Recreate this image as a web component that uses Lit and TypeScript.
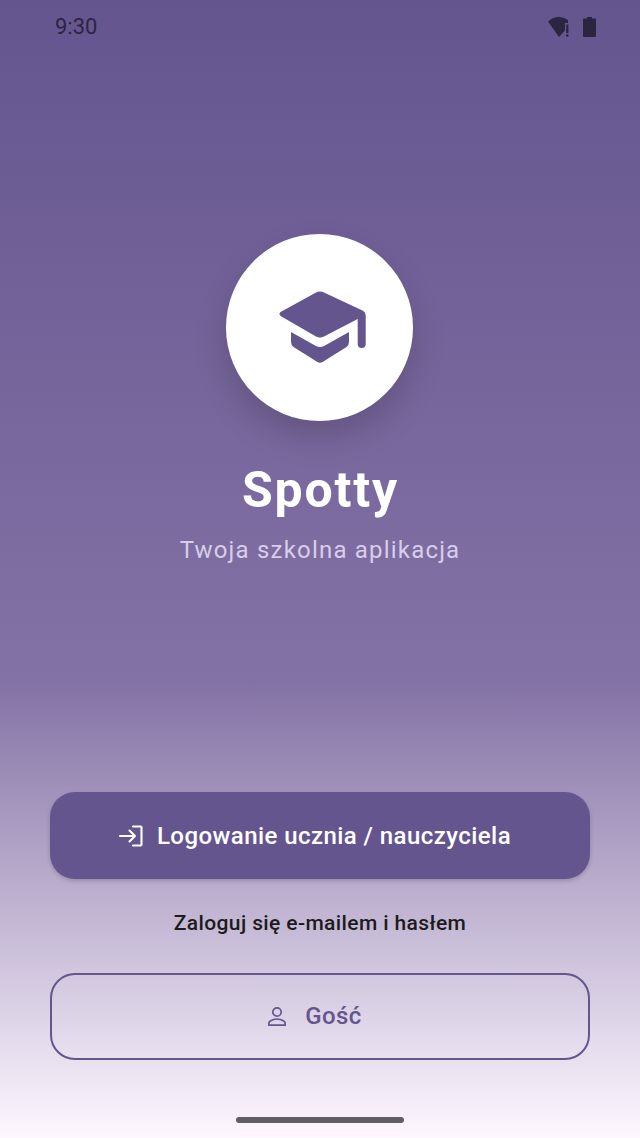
import { LitElement, html, css } from "lit";
import { customElement } from "lit/decorators.js";

@customElement("app-root")
export class AppRoot extends LitElement {
  static styles = css`
    :host {
      display: block;
      width: 640px;
      height: 1138px;
      font-family: Roboto, "Noto Sans", sans-serif;
    }
    .page {
      position: relative;
      display: flex;
      flex-direction: column;
      box-sizing: border-box;
      height: 1138px;
      overflow: hidden;
      background: linear-gradient(180deg, #65558f 0%, #8372a5 60%, #fef7ff 100%);
    }
    .status {
      display: flex;
      justify-content: space-between;
      align-items: center;
      height: 52px;
      padding: 2px 44px 0 55px;
      box-sizing: border-box;
      color: #2c2540;
      font-size: 22px;
      line-height: 50px;
    }
    .status-icons {
      display: flex;
      align-items: center;
      gap: 14px;
    }
    .status-icons svg {
      display: block;
    }
    .hero {
      display: flex;
      flex-direction: column;
      align-items: center;
      padding-top: 182px;
    }
    .logo {
      display: flex;
      align-items: center;
      justify-content: center;
      width: 187px;
      height: 187px;
      margin-right: 1px;
      border-radius: 50%;
      background: #fff;
      box-shadow: 0 16px 32px rgba(0, 0, 0, 0.17);
    }
    .cap {
      margin-bottom: 1px;
    }
    h1 {
      margin: 38px 0 0 1px;
      font-size: 50px;
      line-height: 62px;
      font-weight: 700;
      letter-spacing: 1.8px;
      color: #fff;
    }
    .sub {
      margin: 13px 0 0;
      font-size: 24px;
      line-height: 32px;
      letter-spacing: 1.2px;
      color: #d8cdea;
    }
    .actions {
      display: flex;
      flex-direction: column;
      margin-top: auto;
      padding: 0 50px 78.5px;
    }
    .btn {
      display: flex;
      align-items: center;
      justify-content: center;
      box-sizing: border-box;
      height: 87px;
      padding-right: 11px;
      border-radius: 25px;
      font-size: 24px;
      font-weight: 500;
      letter-spacing: 0.44px;
    }
    .primary {
      gap: 13px;
      background: #65558f;
      color: #fff;
      box-shadow: 0 2px 4px rgba(0, 0, 0, 0.18);
    }
    .hint {
      margin: 29.7px 0 36px;
      text-align: center;
      font-size: 21px;
      line-height: 28px;
      font-weight: 500;
      letter-spacing: 0.38px;
      color: #1d1b20;
    }
    .ghost {
      gap: 18px;
      height: 86.5px;
      border: 2px solid #65558f;
      color: #65558f;
    }
    .home {
      position: absolute;
      left: 236px;
      bottom: 15px;
      width: 168px;
      height: 6px;
      border-radius: 3px;
      background: #605d66;
    }
  `;

  render() {
    return html`
      <div class="page">
        <div class="status">
          <span>9:30</span>
          <span class="status-icons">
            <svg width="21" height="20" viewBox="0 0 21 20">
              <path fill="#2c2540" d="M0 4.500C3 1.800 6.800 0 10.500 0c3.300 0 6.500 1.100 9.500 3.300V6H17V13.500L11 20z"/>
              <path fill="#2c2540" d="M18.200 7.500h2.200v8.500h-2.200zM18.200 17.300h2.200v2.500h-2.200z"/>
            </svg>
            <svg width="13" height="20" viewBox="0 0 13 20">
              <path fill="#2c2540" d="M4 0h5v1.500h3a1 1 0 0 1 1 1V19a1 1 0 0 1-1 1H1a1 1 0 0 1-1-1V2.500a1 1 0 0 1 1-1h3z"/>
            </svg>
          </span>
        </div>
        <div class="hero">
          <div class="logo">
            <svg class="cap" width="96" height="96" viewBox="0 0 96 96">
              <path fill="#65558f" d="M44 13.500L9 32.800Q5.800 35 9 37.200L44 57.600Q48 59.600 52 57.600L85.700 40V65a4 4 0 0 0 8 0V36.500Q93.700 33.200 91 31.800L52 13.500Q48 11.600 44 13.500Z"/>
              <path fill="#65558f" d="M19 53V63Q19 66.400 21.500 68L45 82.800Q48 84.600 51 82.800L74.500 68Q77 66.400 77 63V53L52 67Q48 69 44 67Z"/>
            </svg>
          </div>
          <h1>Spotty</h1>
          <p class="sub">Twoja szkolna aplikacja</p>
        </div>
        <div class="actions">
          <div class="btn primary">
            <svg width="26" height="26" viewBox="0 0 26 26" fill="none" stroke="#fff" stroke-width="2.100" stroke-linecap="round" stroke-linejoin="round">
              <path d="M2 13H17M11.500 7.500L17 13l-5.500 5.500"/>
              <path d="M15 3.500h7.500a1 1 0 0 1 1 1v17a1 1 0 0 1-1 1H15"/>
            </svg>
            <span>Logowanie ucznia / nauczyciela</span>
          </div>
          <div class="hint">Zaloguj się e-mailem i hasłem</div>
          <div class="btn ghost">
            <svg width="20" height="20" viewBox="0 0 20 20" fill="none" stroke="#65558f" stroke-width="1.700">
              <circle cx="10" cy="6" r="4.200"/>
              <path d="M1.900 19.100V17.300c0-1 .5-1.800 1.400-2.300 2-1.300 4.300-2 6.700-2s4.700.7 6.700 2c.9.5 1.400 1.300 1.400 2.300v1.800z"/>
            </svg>
            <span>Gość</span>
          </div>
        </div>
        <div class="home"></div>
      </div>
    `;
  }
}
